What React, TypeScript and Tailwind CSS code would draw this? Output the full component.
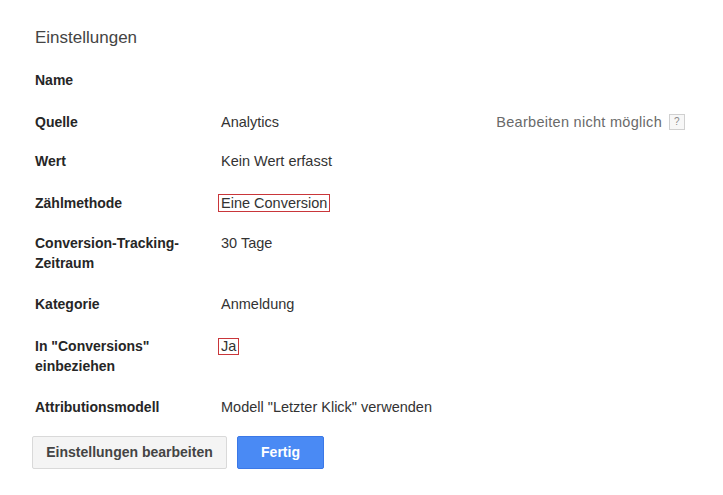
import React from "react";

function Row({ label, children, right }: { label: React.ReactNode; children?: React.ReactNode; right?: React.ReactNode }) {
  return (
    <div className="flex items-start leading-[20px]">
      <div className="w-[186px] shrink-0 text-[14px] font-bold text-[#262626]">{label}</div>
      <div className="flex-1 text-[14.5px] text-[#333]">{children}</div>
      {right}
    </div>
  );
}

export default function App() {
  return (
    <div
      className="w-[723px] h-[495px] bg-white pl-[35px] pr-[38px] pt-[26px]"
      style={{ fontFamily: '"Liberation Sans", Arial, sans-serif' }}
    >
      <div className="text-[17px] leading-[24px] text-[#444]">Einstellungen</div>
      <div className="mt-[20px] flex flex-col gap-[21px]">
        <Row label="Name" />
        <div className="mt-[1px]">
          <Row
            label="Quelle"
            right={
              <div className="flex items-center gap-[7px] text-[14.5px] text-[#6a6a6a] tracking-[0.02em]">
                <span>Bearbeiten nicht möglich</span>
                <span className="flex h-[16px] w-[16px] items-center justify-center border border-[#d0d0d0] bg-[#f7f7f7] text-[10px] leading-none text-[#8a8a8a]">
                  ?
                </span>
              </div>
            }
          >
            Analytics
          </Row>
        </div>
        <div className="-mt-[2px]">
          <Row label="Wert">Kein Wert erfasst</Row>
        </div>
        <div className="mt-[1px]">
          <Row label="Zählmethode">
            <span className="-ml-[3px] inline-block border border-[#c9363a] px-[2px] leading-[16px]">Eine Conversion</span>
          </Row>
        </div>
        <div className="-mt-[1px]">
          <Row
            label={
              <>
                Conversion-Tracking-
                <br />
                Zeitraum
              </>
            }
          >
            30 Tage
          </Row>
        </div>
        <Row label="Kategorie">Anmeldung</Row>
        <div className="mt-[1px]">
          <Row
            label={
              <>
                In "Conversions"
                <br />
                einbeziehen
              </>
            }
          >
            <span className="-ml-[3px] inline-block border border-[#c9363a] px-[2px] leading-[15px]">Ja</span>
          </Row>
        </div>
        <Row label="Attributionsmodell">Modell "Letzter Klick" verwenden</Row>
      </div>
      <div className="mt-[19px] -ml-[3px] flex gap-[10px]">
        <button className="h-[33px] w-[195px] rounded-[2px] border border-[#d9d9d9] bg-[#f4f4f4] text-[14px] font-bold text-[#444]">
          Einstellungen bearbeiten
        </button>
        <button className="h-[33px] w-[87px] rounded-[2px] border border-[#3b78e7] bg-[#4a8af4] text-[14px] font-bold text-white">
          Fertig
        </button>
      </div>
    </div>
  );
}
